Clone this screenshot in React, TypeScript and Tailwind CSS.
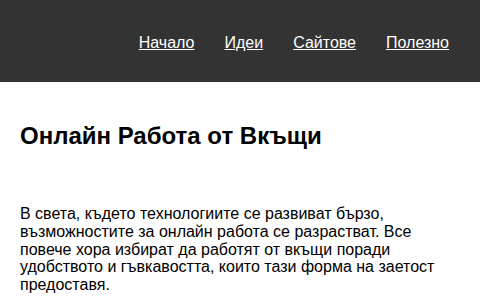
export default function App() {
  const links = ["Начало", "Идеи", "Сайтове", "Полезно"];

  return (
    <div className="min-h-[300px] bg-white font-['Liberation_Sans',Arial,sans-serif] text-black">
      <header className="h-[82px] bg-[#333333] pt-[31px] pr-[31px]">
        <nav>
          <ul className="flex justify-end gap-[30px]">
            {links.map((label) => (
              <li key={label}>
                <a href="#" className="text-[16px] leading-[18px] text-white underline">
                  {label}
                </a>
              </li>
            ))}
          </ul>
        </nav>
      </header>

      <main className="px-5 pt-[40px]">
        <h2 className="text-[24px] font-bold leading-[28px]">Онлайн Работа от Вкъщи</h2>
        <p className="mt-[55px] text-[16px] leading-[17.8px]">
          В света, където технологиите се развиват бързо, възможностите за онлайн работа се
          разрастват. Все повече хора избират да работят от вкъщи поради удобството и
          гъвкавостта, които тази форма на заетост предоставя.
        </p>
      </main>
    </div>
  );
}
